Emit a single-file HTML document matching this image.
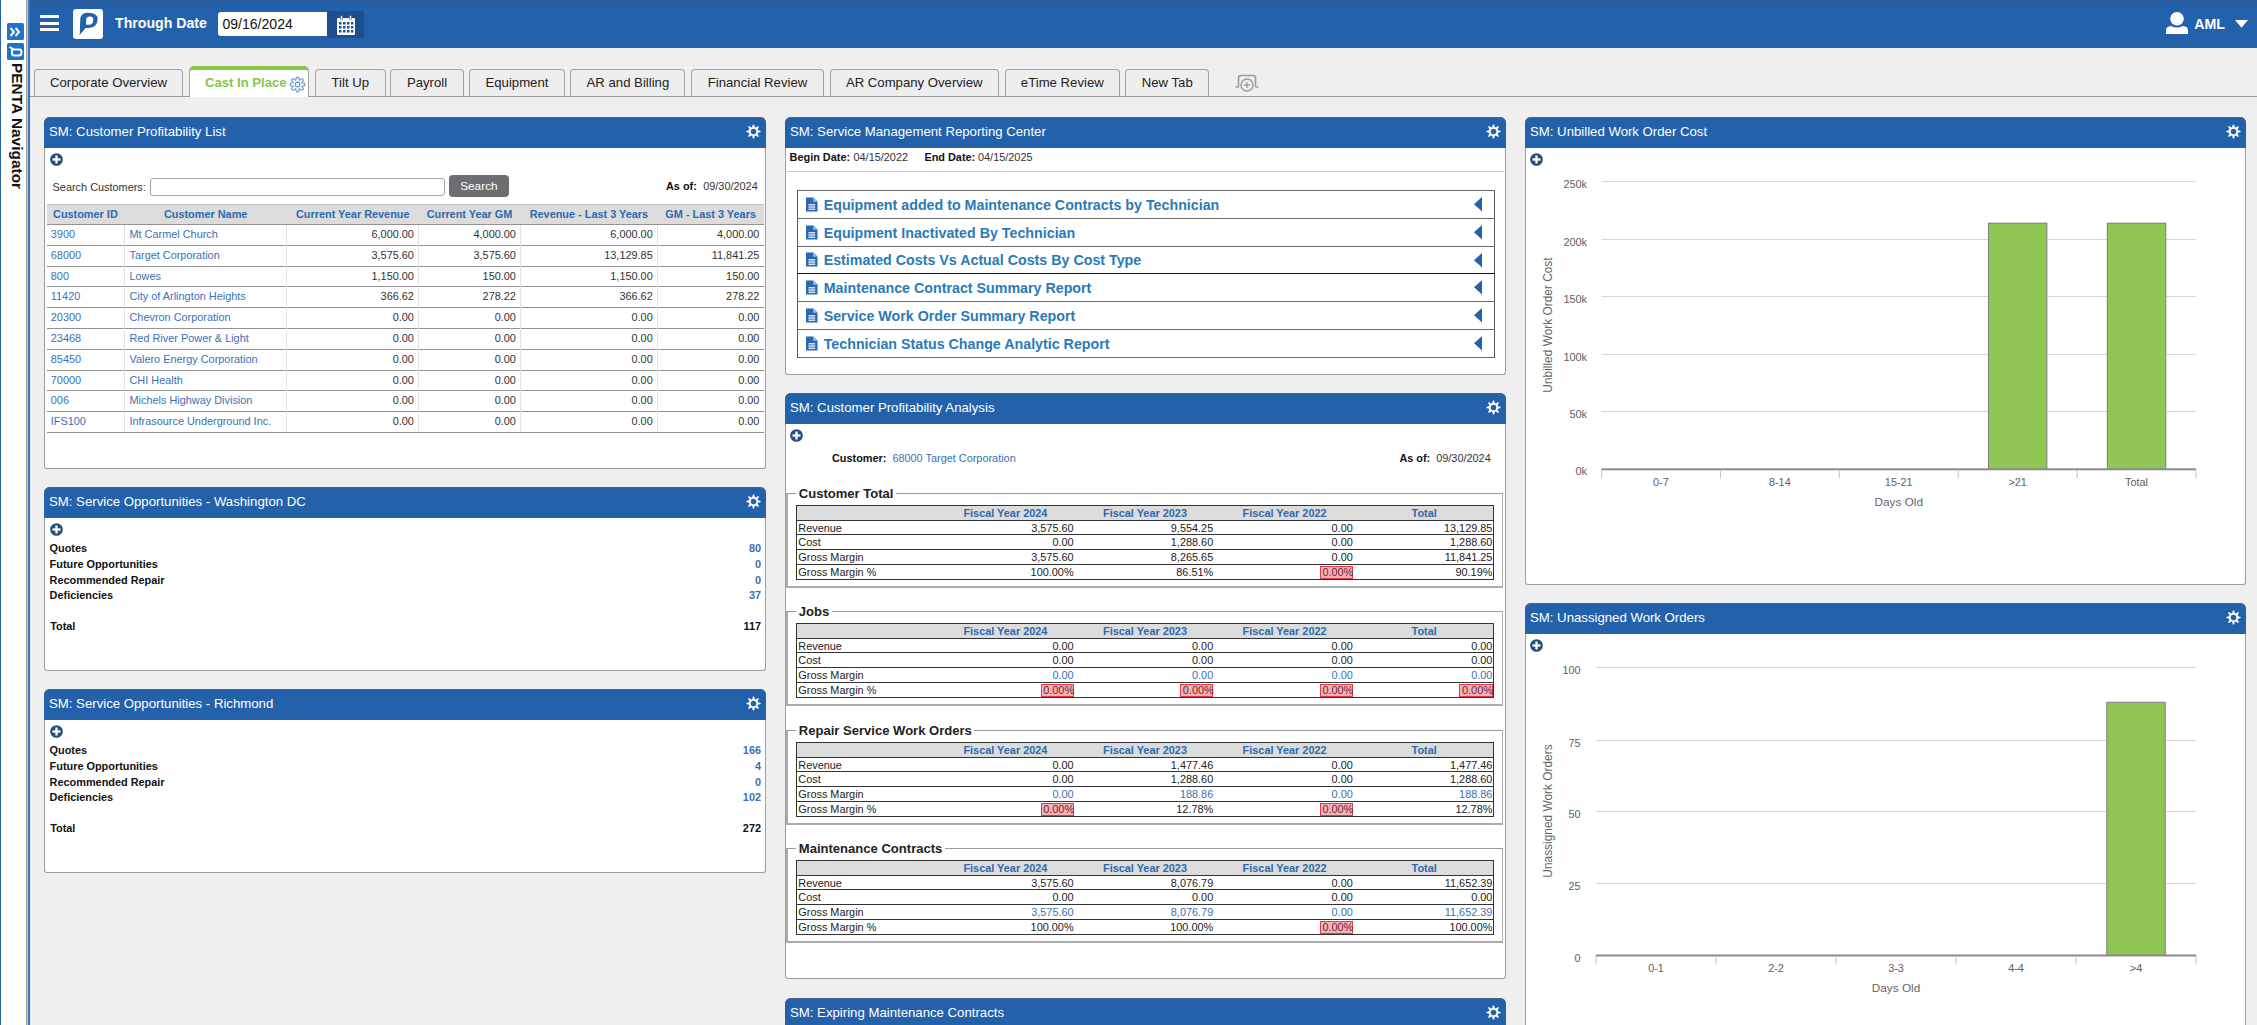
<!DOCTYPE html><html><head><meta charset="utf-8"><title>PENTA</title><style>
*{margin:0;padding:0;box-sizing:border-box}
html,body{width:2257px;height:1025px;overflow:hidden;background:#efefef;font-family:"Liberation Sans",sans-serif;color:#333;position:relative}
.t{position:absolute;white-space:nowrap;line-height:0;height:0;display:flex;align-items:center}
.t > span{line-height:normal}
.tr{justify-content:flex-end}
.tc{transform:translateX(-50%)}
.panel{position:absolute;background:#fff;border:1px solid #9d9d9d;border-top:none;border-radius:6px 6px 3px 3px}
.ph{position:absolute;left:-1px;right:-1px;top:0;height:31px;background:#2362ab;border-radius:6px 6px 0 0;box-shadow:inset 0 1px 0 #4a6286}
.pt{position:absolute;left:5px;top:15.1px;line-height:0;color:#fff;font-size:13.2px;white-space:nowrap}
.s11{font-size:10.9px}
.b{font-weight:bold}
.lk{color:#3b70b5}
.hdr{color:#2b6ab0;font-weight:bold}
</style></head><body>
<div style="position:absolute;left:0;top:0;width:1.1px;height:1025px;background:#2a65a6"></div>
<div style="position:absolute;left:1.1px;top:0;width:24.8px;height:1025px;background:#fff"></div>
<div style="position:absolute;left:25.8px;top:0;width:1.5px;height:1025px;background:#9b9b9b"></div>
<div style="position:absolute;left:27.3px;top:0;width:0.7px;height:1025px;background:#c6ccca"></div>
<div style="position:absolute;left:28px;top:0;width:2px;height:1025px;background:#3a77b9"></div>
<div style="position:absolute;left:7.2px;top:22.5px;width:16.7px;height:17.5px;background:#1f74c6;border-radius:1.5px"></div>
<svg style="position:absolute;left:7.2px;top:22.5px" width="17" height="18" viewBox="0 0 17 18"><path d="M3.5,5 L7,9 L3.5,13 M8.5,5 L12,9 L8.5,13" stroke="#fff" stroke-width="1.9" fill="none"/></svg>
<div style="position:absolute;left:7.2px;top:42.6px;width:16.7px;height:17.5px;background:#1f74c6;border-radius:1.5px"></div>
<svg style="position:absolute;left:7.2px;top:42.6px" width="17" height="18" viewBox="0 0 17 18"><path d="M2.5,4 L7,6.5 L12.5,6.5 Q14.5,6.5 14.5,9 Q14.5,12.5 12,12.5 L7,12.5 Q5,12.5 5,10 L5,6.6" stroke="#fff" stroke-width="2" fill="none"/></svg>
<div style="position:absolute;left:24.5px;top:62.6px;transform-origin:0 0;transform:rotate(90deg);white-space:nowrap;font-weight:bold;font-size:15.45px;line-height:15px;color:#111">PENTA Navigator</div>
<div style="position:absolute;left:30px;top:0;width:2227px;height:48px;background:#2362ab"></div>
<div style="position:absolute;left:30px;top:0;width:2227px;height:1.5px;background:#2d5d98"></div>
<div style="position:absolute;left:40px;top:14.7px;width:19.2px;height:3px;background:#fff;border-radius:0.5px"></div>
<div style="position:absolute;left:40px;top:21.5px;width:19.2px;height:3px;background:#fff;border-radius:0.5px"></div>
<div style="position:absolute;left:40px;top:28.2px;width:19.2px;height:3px;background:#fff;border-radius:0.5px"></div>
<div style="position:absolute;left:72.8px;top:8.8px;width:30.3px;height:30.3px;background:#fff;border-radius:3px"></div>
<svg style="position:absolute;left:72.8px;top:8.8px" width="31" height="31" viewBox="0 0 31 31"><path fill="#2362ab" fill-rule="evenodd" d="M7.3,9.5 Q7.9,3.8 15,3.8 Q24.9,3.8 24.6,10.5 Q24.2,18.9 15.5,18.9 L12.6,18.9 L6.7,25.9 Z M13.1,15.7 L13.2,10.2 Q13.5,7.6 16.9,7.6 Q20.6,7.6 20.3,11.2 Q20,15.7 16,15.7 Z"/></svg>
<div class="t " style="left:115px;top:22.8px;"><span style="font-size:14.15px;font-weight:bold;color:#fff">Through Date</span></div>
<div style="position:absolute;left:217.5px;top:11.8px;width:110px;height:24.7px;background:#fff;border-radius:3px 0 0 3px"></div>
<div class="t " style="left:222.4px;top:24px;"><span style="font-size:14.07px;color:#111">09/16/2024</span></div>
<div style="position:absolute;left:327.3px;top:10.9px;width:36.3px;height:26.8px;background:#1d4f8d;border-radius:0 3px 3px 0"></div>
<svg style="position:absolute;left:335.8px;top:14.7px" width="20" height="20" viewBox="0 0 20 20"><path fill="#fff" fill-rule="evenodd" d="M1,4 Q1,3 2,3 L18,3 Q19,3 19,4 L19,19 Q19,20 18,20 L2,20 Q1,20 1,19 Z M3,7 L3,9.5 L5.5,9.5 L5.5,7Z M7,7 L7,9.5 L9.5,9.5 L9.5,7Z M11,7 L11,9.5 L13.5,9.5 L13.5,7Z M15,7 L15,9.5 L17.3,9.5 L17.3,7Z M3,11 L3,13.5 L5.5,13.5 L5.5,11Z M7,11 L7,13.5 L9.5,13.5 L9.5,11Z M11,11 L11,13.5 L13.5,13.5 L13.5,11Z M15,11 L15,13.5 L17.3,13.5 L17.3,11Z M3,15 L3,17.5 L5.5,17.5 L5.5,15Z M7,15 L7,17.5 L9.5,17.5 L9.5,15Z M11,15 L11,17.5 L13.5,17.5 L13.5,15Z M15,15 L15,17.5 L17.3,17.5 L17.3,15Z"/><rect x="4.6" y="0.5" width="2" height="4.5" rx="1" fill="#fff" stroke="#1d4f8d" stroke-width="0.6"/><rect x="13.4" y="0.5" width="2" height="4.5" rx="1" fill="#fff" stroke="#1d4f8d" stroke-width="0.6"/></svg>
<svg style="position:absolute;left:2165px;top:11px" width="24" height="24" viewBox="0 0 24 24"><circle cx="12" cy="7.7" r="6.8" fill="#fff"/><path fill="#fff" d="M1,22.9 L1,20 Q1,15.3 6,15.1 Q9,16.6 12,16.6 Q15,16.6 18,15.1 Q23,15.3 23,20 L23,22.9 Z"/></svg>
<div class="t " style="left:2194.3px;top:23.8px;"><span style="font-size:14.13px;font-weight:bold;color:#fff">AML</span></div>
<svg style="position:absolute;left:2234.5px;top:19.8px" width="13" height="8" viewBox="0 0 13 8"><path d="M0,0 L13,0 L6.5,7.7Z" fill="#fff"/></svg>
<div style="position:absolute;left:30px;top:95.6px;width:2227px;height:1.2px;background:#9b9b9b"></div>
<div style="position:absolute;left:34.2px;top:69.2px;width:148.60000000000002px;height:27px;background:#eeeeee;border:1.2px solid #a3a3a3;border-bottom:none;border-radius:4px 4px 0 0"></div>
<div class="t tc " style="left:108.5px;top:82.8px;"><span style="font-size:13.16px;color:#222">Corporate Overview</span></div>
<div style="position:absolute;left:189.3px;top:65.6px;width:120.19999999999999px;height:31.6px;background:#fff;border-radius:5px 5px 0 0;border-top:4.2px solid #88c54b;border-left:1.2px solid #a3a3a3;border-right:1.2px solid #a3a3a3"></div>
<div class="t " style="left:205px;top:82.8px;"><span style="font-size:13.1px;font-weight:bold;color:#88c44c">Cast In Place</span></div>
<svg style="position:absolute;left:289.2px;top:75.7px" width="17" height="17" viewBox="-8.5 -8.5 17 17"><path fill="none" stroke="#5f8ed0" stroke-width="1.05" stroke-linejoin="round" d="M7.35,0.00 L7.35,0.19 L7.34,0.38 L7.32,0.58 L7.29,0.77 L7.23,0.95 L7.13,1.13 L6.92,1.28 L6.52,1.39 L5.95,1.43 L5.38,1.44 L4.96,1.47 L4.72,1.53 L4.57,1.62 L4.48,1.72 L4.43,1.83 L4.39,1.95 L4.38,2.09 L4.42,2.25 L4.55,2.47 L4.82,2.78 L5.22,3.20 L5.59,3.63 L5.80,3.98 L5.84,4.24 L5.79,4.44 L5.69,4.61 L5.58,4.77 L5.46,4.92 L5.33,5.06 L5.20,5.20 L5.06,5.33 L4.92,5.46 L4.77,5.58 L4.61,5.69 L4.44,5.79 L4.24,5.84 L3.98,5.80 L3.63,5.59 L3.20,5.22 L2.78,4.82 L2.47,4.55 L2.25,4.42 L2.09,4.38 L1.95,4.39 L1.83,4.43 L1.72,4.48 L1.62,4.57 L1.53,4.72 L1.47,4.96 L1.44,5.38 L1.43,5.95 L1.39,6.52 L1.28,6.92 L1.13,7.13 L0.95,7.23 L0.77,7.29 L0.58,7.32 L0.38,7.34 L0.19,7.35 L0.00,7.35 L-0.19,7.35 L-0.38,7.34 L-0.58,7.32 L-0.77,7.29 L-0.95,7.23 L-1.13,7.13 L-1.28,6.92 L-1.39,6.52 L-1.43,5.95 L-1.44,5.38 L-1.47,4.96 L-1.53,4.72 L-1.62,4.57 L-1.72,4.48 L-1.83,4.43 L-1.95,4.39 L-2.09,4.38 L-2.25,4.42 L-2.47,4.55 L-2.78,4.82 L-3.20,5.22 L-3.63,5.59 L-3.98,5.80 L-4.24,5.84 L-4.44,5.79 L-4.61,5.69 L-4.77,5.58 L-4.92,5.46 L-5.06,5.33 L-5.20,5.20 L-5.33,5.06 L-5.46,4.92 L-5.58,4.77 L-5.69,4.61 L-5.79,4.44 L-5.84,4.24 L-5.80,3.98 L-5.59,3.63 L-5.22,3.20 L-4.82,2.78 L-4.55,2.47 L-4.42,2.25 L-4.38,2.09 L-4.39,1.95 L-4.43,1.83 L-4.48,1.72 L-4.57,1.62 L-4.72,1.53 L-4.96,1.47 L-5.38,1.44 L-5.95,1.43 L-6.52,1.39 L-6.92,1.28 L-7.13,1.13 L-7.23,0.95 L-7.29,0.77 L-7.32,0.58 L-7.34,0.38 L-7.35,0.19 L-7.35,0.00 L-7.35,-0.19 L-7.34,-0.38 L-7.32,-0.58 L-7.29,-0.77 L-7.23,-0.95 L-7.13,-1.13 L-6.92,-1.28 L-6.52,-1.39 L-5.95,-1.43 L-5.38,-1.44 L-4.96,-1.47 L-4.72,-1.53 L-4.57,-1.62 L-4.48,-1.72 L-4.43,-1.83 L-4.39,-1.95 L-4.38,-2.09 L-4.42,-2.25 L-4.55,-2.47 L-4.82,-2.78 L-5.22,-3.20 L-5.59,-3.63 L-5.80,-3.98 L-5.84,-4.24 L-5.79,-4.44 L-5.69,-4.61 L-5.58,-4.77 L-5.46,-4.92 L-5.33,-5.06 L-5.20,-5.20 L-5.06,-5.33 L-4.92,-5.46 L-4.77,-5.58 L-4.61,-5.69 L-4.44,-5.79 L-4.24,-5.84 L-3.98,-5.80 L-3.63,-5.59 L-3.20,-5.22 L-2.78,-4.82 L-2.47,-4.55 L-2.25,-4.42 L-2.09,-4.38 L-1.95,-4.39 L-1.83,-4.43 L-1.72,-4.48 L-1.62,-4.57 L-1.53,-4.72 L-1.47,-4.96 L-1.44,-5.38 L-1.43,-5.95 L-1.39,-6.52 L-1.28,-6.92 L-1.13,-7.13 L-0.95,-7.23 L-0.77,-7.29 L-0.58,-7.32 L-0.38,-7.34 L-0.19,-7.35 L-0.00,-7.35 L0.19,-7.35 L0.38,-7.34 L0.58,-7.32 L0.77,-7.29 L0.95,-7.23 L1.13,-7.13 L1.28,-6.92 L1.39,-6.52 L1.43,-5.95 L1.44,-5.38 L1.47,-4.96 L1.53,-4.72 L1.62,-4.57 L1.72,-4.48 L1.83,-4.43 L1.95,-4.39 L2.09,-4.38 L2.25,-4.42 L2.47,-4.55 L2.78,-4.82 L3.20,-5.22 L3.63,-5.59 L3.98,-5.80 L4.24,-5.84 L4.44,-5.79 L4.61,-5.69 L4.77,-5.58 L4.92,-5.46 L5.06,-5.33 L5.20,-5.20 L5.33,-5.06 L5.46,-4.92 L5.58,-4.77 L5.69,-4.61 L5.79,-4.44 L5.84,-4.24 L5.80,-3.98 L5.59,-3.63 L5.22,-3.20 L4.82,-2.78 L4.55,-2.47 L4.42,-2.25 L4.38,-2.09 L4.39,-1.95 L4.43,-1.83 L4.48,-1.72 L4.57,-1.62 L4.72,-1.53 L4.96,-1.47 L5.38,-1.44 L5.95,-1.43 L6.52,-1.39 L6.92,-1.28 L7.13,-1.13 L7.23,-0.95 L7.29,-0.77 L7.32,-0.58 L7.34,-0.38 L7.35,-0.19Z"/><circle cx="0" cy="0" r="2.3" fill="none" stroke="#5f8ed0" stroke-width="1.2"/></svg>
<div style="position:absolute;left:315px;top:69.2px;width:70.60000000000002px;height:27px;background:#eeeeee;border:1.2px solid #a3a3a3;border-bottom:none;border-radius:4px 4px 0 0"></div>
<div class="t tc " style="left:350.3px;top:82.8px;"><span style="font-size:13.16px;color:#222">Tilt Up</span></div>
<div style="position:absolute;left:390.4px;top:69.2px;width:73.30000000000001px;height:27px;background:#eeeeee;border:1.2px solid #a3a3a3;border-bottom:none;border-radius:4px 4px 0 0"></div>
<div class="t tc " style="left:427.04999999999995px;top:82.8px;"><span style="font-size:13.16px;color:#222">Payroll</span></div>
<div style="position:absolute;left:469.3px;top:69.2px;width:95.30000000000001px;height:27px;background:#eeeeee;border:1.2px solid #a3a3a3;border-bottom:none;border-radius:4px 4px 0 0"></div>
<div class="t tc " style="left:516.95px;top:82.8px;"><span style="font-size:13.16px;color:#222">Equipment</span></div>
<div style="position:absolute;left:570.4px;top:69.2px;width:115.0px;height:27px;background:#eeeeee;border:1.2px solid #a3a3a3;border-bottom:none;border-radius:4px 4px 0 0"></div>
<div class="t tc " style="left:627.9px;top:82.8px;"><span style="font-size:13.16px;color:#222">AR and Billing</span></div>
<div style="position:absolute;left:691.4px;top:69.2px;width:132.20000000000005px;height:27px;background:#eeeeee;border:1.2px solid #a3a3a3;border-bottom:none;border-radius:4px 4px 0 0"></div>
<div class="t tc " style="left:757.5px;top:82.8px;"><span style="font-size:13.16px;color:#222">Financial Review</span></div>
<div style="position:absolute;left:829.8px;top:69.2px;width:168.9000000000001px;height:27px;background:#eeeeee;border:1.2px solid #a3a3a3;border-bottom:none;border-radius:4px 4px 0 0"></div>
<div class="t tc " style="left:914.25px;top:82.8px;"><span style="font-size:13.16px;color:#222">AR Company Overview</span></div>
<div style="position:absolute;left:1005px;top:69.2px;width:114.59999999999991px;height:27px;background:#eeeeee;border:1.2px solid #a3a3a3;border-bottom:none;border-radius:4px 4px 0 0"></div>
<div class="t tc " style="left:1062.3px;top:82.8px;"><span style="font-size:13.16px;color:#222">eTime Review</span></div>
<div style="position:absolute;left:1125.3px;top:69.2px;width:83.90000000000009px;height:27px;background:#eeeeee;border:1.2px solid #a3a3a3;border-bottom:none;border-radius:4px 4px 0 0"></div>
<div class="t tc " style="left:1167.25px;top:82.8px;"><span style="font-size:13.16px;color:#222">New Tab</span></div>
<svg style="position:absolute;left:1234px;top:74px" width="26" height="19" viewBox="0 0 26 19"><path d="M1.5,13 L4,13 Q4.5,13 4.5,12 L4.5,4 Q4.5,1.5 7,1.5 L19,1.5 Q21.5,1.5 21.5,4 L21.5,12 Q21.5,13 22.5,13 L24.5,13" fill="none" stroke="#9c9c9c" stroke-width="1.6"/><circle cx="13" cy="11" r="6" fill="#eee" stroke="#9c9c9c" stroke-width="1.5"/><path d="M13,8 L13,14 M10,11 L16,11" stroke="#9c9c9c" stroke-width="1.3"/></svg>
<div class="panel" style="left:44px;top:117px;width:722px;height:352px"><div class="ph"><span class="pt">SM: Customer Profitability List</span></div></div><svg style="position:absolute;left:745.9px;top:123.9px" width="15" height="15" viewBox="-8 -8 16 16"><path fill="#fff" fill-rule="evenodd" d="M-1.39,-4.80 L-0.60,-7.58 L0.60,-7.58 L1.39,-4.80 L2.41,-4.38 L4.94,-5.78 L5.78,-4.94 L4.38,-2.41 L4.80,-1.39 L7.58,-0.60 L7.58,0.60 L4.80,1.39 L4.38,2.41 L5.78,4.94 L4.94,5.78 L2.41,4.38 L1.39,4.80 L0.60,7.58 L-0.60,7.58 L-1.39,4.80 L-2.41,4.38 L-4.94,5.78 L-5.78,4.94 L-4.38,2.41 L-4.80,1.39 L-7.58,0.60 L-7.58,-0.60 L-4.80,-1.39 L-4.38,-2.41 L-5.78,-4.94 L-4.94,-5.78 L-2.41,-4.38Z M3.0,0 A3.0,3.0 0 1,0 -3.0,0 A3.0,3.0 0 1,0 3.0,0Z"/></svg>
<svg style="position:absolute;left:50.4px;top:153.0px" width="13" height="13" viewBox="0 0 13 13"><circle cx="6.5" cy="6.5" r="6.35" fill="#234e7e"/><rect x="2.5" y="5.35" width="8" height="2.3" fill="#fff"/><rect x="5.35" y="2.5" width="2.3" height="8" fill="#fff"/></svg>
<div class="t " style="left:52.6px;top:186.5px;"><span class="s11">Search Customers:</span></div>
<div style="position:absolute;left:150px;top:177.7px;width:294.5px;height:18px;background:#fff;border:1px solid #a5a5a5;border-radius:3px"></div>
<div style="position:absolute;left:449px;top:175.2px;width:59.8px;height:21.5px;background:#6d6e71;border-radius:4px"></div>
<div class="t tc " style="left:478.9px;top:186.2px;"><span style="font-size:11.83px;color:#fff">Search</span></div>
<div class="t " style="left:666px;top:186px;"><span class="s11 b" style="color:#111">As of:</span></div>
<div class="t tr " style="right:1499.3px;top:186px;"><span class="s11">09/30/2024</span></div>
<div style="position:absolute;left:46.5px;top:203.6px;width:717.5px;height:20.4px;background:#dcdcdc;border-top:1px solid #c4c4c4"></div>
<div class="t tc " style="left:85.4px;top:214px;"><span class="s11 hdr">Customer ID</span></div>
<div class="t tc " style="left:205.65px;top:214px;"><span class="s11 hdr">Customer Name</span></div>
<div class="t tc " style="left:352.75px;top:214px;"><span class="s11 hdr">Current Year Revenue</span></div>
<div class="t tc " style="left:469.5px;top:214px;"><span class="s11 hdr">Current Year GM</span></div>
<div class="t tc " style="left:588.9px;top:214px;"><span class="s11 hdr">Revenue - Last 3 Years</span></div>
<div class="t tc " style="left:710.65px;top:214px;"><span class="s11 hdr">GM - Last 3 Years</span></div>
<div style="position:absolute;left:46.5px;top:224px;width:717.5px;height:1px;background:#939393"></div>
<div style="position:absolute;left:46.5px;top:245px;width:717.5px;height:1px;background:#939393"></div>
<div style="position:absolute;left:46.5px;top:266px;width:717.5px;height:1px;background:#939393"></div>
<div style="position:absolute;left:46.5px;top:286px;width:717.5px;height:1px;background:#939393"></div>
<div style="position:absolute;left:46.5px;top:307px;width:717.5px;height:1px;background:#939393"></div>
<div style="position:absolute;left:46.5px;top:328px;width:717.5px;height:1px;background:#939393"></div>
<div style="position:absolute;left:46.5px;top:349px;width:717.5px;height:1px;background:#939393"></div>
<div style="position:absolute;left:46.5px;top:370px;width:717.5px;height:1px;background:#939393"></div>
<div style="position:absolute;left:46.5px;top:390px;width:717.5px;height:1px;background:#939393"></div>
<div style="position:absolute;left:46.5px;top:411px;width:717.5px;height:1px;background:#939393"></div>
<div style="position:absolute;left:46.5px;top:432px;width:717.5px;height:1px;background:#939393"></div>
<div class="t " style="left:50.8px;top:234.2px;"><span class="s11 lk">3900</span></div>
<div class="t " style="left:129.5px;top:234.2px;"><span class="s11 lk">Mt Carmel Church</span></div>
<div class="t tr " style="right:1843.1px;top:234.2px;"><span class="s11">6,000.00</span></div>
<div class="t tr " style="right:1741.1px;top:234.2px;"><span class="s11">4,000.00</span></div>
<div class="t tr " style="right:1604.3000000000002px;top:234.2px;"><span class="s11">6,000.00</span></div>
<div class="t tr " style="right:1497.6px;top:234.2px;"><span class="s11">4,000.00</span></div>
<div class="t " style="left:50.8px;top:255.2px;"><span class="s11 lk">68000</span></div>
<div class="t " style="left:129.5px;top:255.2px;"><span class="s11 lk">Target Corporation</span></div>
<div class="t tr " style="right:1843.1px;top:255.2px;"><span class="s11">3,575.60</span></div>
<div class="t tr " style="right:1741.1px;top:255.2px;"><span class="s11">3,575.60</span></div>
<div class="t tr " style="right:1604.3000000000002px;top:255.2px;"><span class="s11">13,129.85</span></div>
<div class="t tr " style="right:1497.6px;top:255.2px;"><span class="s11">11,841.25</span></div>
<div class="t " style="left:50.8px;top:275.7px;"><span class="s11 lk">800</span></div>
<div class="t " style="left:129.5px;top:275.7px;"><span class="s11 lk">Lowes</span></div>
<div class="t tr " style="right:1843.1px;top:275.7px;"><span class="s11">1,150.00</span></div>
<div class="t tr " style="right:1741.1px;top:275.7px;"><span class="s11">150.00</span></div>
<div class="t tr " style="right:1604.3000000000002px;top:275.7px;"><span class="s11">1,150.00</span></div>
<div class="t tr " style="right:1497.6px;top:275.7px;"><span class="s11">150.00</span></div>
<div class="t " style="left:50.8px;top:296.2px;"><span class="s11 lk">11420</span></div>
<div class="t " style="left:129.5px;top:296.2px;"><span class="s11 lk">City of Arlington Heights</span></div>
<div class="t tr " style="right:1843.1px;top:296.2px;"><span class="s11">366.62</span></div>
<div class="t tr " style="right:1741.1px;top:296.2px;"><span class="s11">278.22</span></div>
<div class="t tr " style="right:1604.3000000000002px;top:296.2px;"><span class="s11">366.62</span></div>
<div class="t tr " style="right:1497.6px;top:296.2px;"><span class="s11">278.22</span></div>
<div class="t " style="left:50.8px;top:317.2px;"><span class="s11 lk">20300</span></div>
<div class="t " style="left:129.5px;top:317.2px;"><span class="s11 lk">Chevron Corporation</span></div>
<div class="t tr " style="right:1843.1px;top:317.2px;"><span class="s11">0.00</span></div>
<div class="t tr " style="right:1741.1px;top:317.2px;"><span class="s11">0.00</span></div>
<div class="t tr " style="right:1604.3000000000002px;top:317.2px;"><span class="s11">0.00</span></div>
<div class="t tr " style="right:1497.6px;top:317.2px;"><span class="s11">0.00</span></div>
<div class="t " style="left:50.8px;top:338.2px;"><span class="s11 lk">23468</span></div>
<div class="t " style="left:129.5px;top:338.2px;"><span class="s11 lk">Red River Power &amp; Light</span></div>
<div class="t tr " style="right:1843.1px;top:338.2px;"><span class="s11">0.00</span></div>
<div class="t tr " style="right:1741.1px;top:338.2px;"><span class="s11">0.00</span></div>
<div class="t tr " style="right:1604.3000000000002px;top:338.2px;"><span class="s11">0.00</span></div>
<div class="t tr " style="right:1497.6px;top:338.2px;"><span class="s11">0.00</span></div>
<div class="t " style="left:50.8px;top:359.2px;"><span class="s11 lk">85450</span></div>
<div class="t " style="left:129.5px;top:359.2px;"><span class="s11 lk">Valero Energy Corporation</span></div>
<div class="t tr " style="right:1843.1px;top:359.2px;"><span class="s11">0.00</span></div>
<div class="t tr " style="right:1741.1px;top:359.2px;"><span class="s11">0.00</span></div>
<div class="t tr " style="right:1604.3000000000002px;top:359.2px;"><span class="s11">0.00</span></div>
<div class="t tr " style="right:1497.6px;top:359.2px;"><span class="s11">0.00</span></div>
<div class="t " style="left:50.8px;top:379.7px;"><span class="s11 lk">70000</span></div>
<div class="t " style="left:129.5px;top:379.7px;"><span class="s11 lk">CHI Health</span></div>
<div class="t tr " style="right:1843.1px;top:379.7px;"><span class="s11">0.00</span></div>
<div class="t tr " style="right:1741.1px;top:379.7px;"><span class="s11">0.00</span></div>
<div class="t tr " style="right:1604.3000000000002px;top:379.7px;"><span class="s11">0.00</span></div>
<div class="t tr " style="right:1497.6px;top:379.7px;"><span class="s11">0.00</span></div>
<div class="t " style="left:50.8px;top:400.2px;"><span class="s11 lk">006</span></div>
<div class="t " style="left:129.5px;top:400.2px;"><span class="s11 lk">Michels Highway Division</span></div>
<div class="t tr " style="right:1843.1px;top:400.2px;"><span class="s11">0.00</span></div>
<div class="t tr " style="right:1741.1px;top:400.2px;"><span class="s11">0.00</span></div>
<div class="t tr " style="right:1604.3000000000002px;top:400.2px;"><span class="s11">0.00</span></div>
<div class="t tr " style="right:1497.6px;top:400.2px;"><span class="s11">0.00</span></div>
<div class="t " style="left:50.8px;top:421.2px;"><span class="s11 lk">IFS100</span></div>
<div class="t " style="left:129.5px;top:421.2px;"><span class="s11 lk">Infrasource Underground Inc.</span></div>
<div class="t tr " style="right:1843.1px;top:421.2px;"><span class="s11">0.00</span></div>
<div class="t tr " style="right:1741.1px;top:421.2px;"><span class="s11">0.00</span></div>
<div class="t tr " style="right:1604.3000000000002px;top:421.2px;"><span class="s11">0.00</span></div>
<div class="t tr " style="right:1497.6px;top:421.2px;"><span class="s11">0.00</span></div>
<div style="position:absolute;left:124px;top:225px;width:1px;height:207px;background:#e2e2e2"></div>
<div style="position:absolute;left:286px;top:225px;width:1px;height:207px;background:#e2e2e2"></div>
<div style="position:absolute;left:418px;top:225px;width:1px;height:207px;background:#e2e2e2"></div>
<div style="position:absolute;left:520px;top:225px;width:1px;height:207px;background:#e2e2e2"></div>
<div style="position:absolute;left:657px;top:225px;width:1px;height:207px;background:#e2e2e2"></div>
<div class="panel" style="left:44px;top:487px;width:722px;height:184px"><div class="ph"><span class="pt">SM: Service Opportunities - Washington DC</span></div></div><svg style="position:absolute;left:745.9px;top:493.9px" width="15" height="15" viewBox="-8 -8 16 16"><path fill="#fff" fill-rule="evenodd" d="M-1.39,-4.80 L-0.60,-7.58 L0.60,-7.58 L1.39,-4.80 L2.41,-4.38 L4.94,-5.78 L5.78,-4.94 L4.38,-2.41 L4.80,-1.39 L7.58,-0.60 L7.58,0.60 L4.80,1.39 L4.38,2.41 L5.78,4.94 L4.94,5.78 L2.41,4.38 L1.39,4.80 L0.60,7.58 L-0.60,7.58 L-1.39,4.80 L-2.41,4.38 L-4.94,5.78 L-5.78,4.94 L-4.38,2.41 L-4.80,1.39 L-7.58,0.60 L-7.58,-0.60 L-4.80,-1.39 L-4.38,-2.41 L-5.78,-4.94 L-4.94,-5.78 L-2.41,-4.38Z M3.0,0 A3.0,3.0 0 1,0 -3.0,0 A3.0,3.0 0 1,0 3.0,0Z"/></svg>
<svg style="position:absolute;left:50.4px;top:523.3px" width="13" height="13" viewBox="0 0 13 13"><circle cx="6.5" cy="6.5" r="6.35" fill="#234e7e"/><rect x="2.5" y="5.35" width="8" height="2.3" fill="#fff"/><rect x="5.35" y="2.5" width="2.3" height="8" fill="#fff"/></svg>
<div class="t " style="left:49.6px;top:547.9px;"><span class="s11 b" style="color:#111">Quotes</span></div>
<div class="t tr " style="right:1496px;top:547.9px;"><span class="s11 b lk">80</span></div>
<div class="t " style="left:49.6px;top:563.9px;"><span class="s11 b" style="color:#111">Future Opportunities</span></div>
<div class="t tr " style="right:1496px;top:563.9px;"><span class="s11 b lk">0</span></div>
<div class="t " style="left:49.6px;top:579.5px;"><span class="s11 b" style="color:#111">Recommended Repair</span></div>
<div class="t tr " style="right:1496px;top:579.5px;"><span class="s11 b lk">0</span></div>
<div class="t " style="left:49.6px;top:595.1px;"><span class="s11 b" style="color:#111">Deficiencies</span></div>
<div class="t tr " style="right:1496px;top:595.1px;"><span class="s11 b lk">37</span></div>
<div class="t " style="left:50.2px;top:626.3px;"><span class="s11 b" style="color:#111">Total</span></div>
<div class="t tr " style="right:1496px;top:626.3px;"><span class="s11 b" style="color:#111">117</span></div>
<div class="panel" style="left:44px;top:689px;width:722px;height:184px"><div class="ph"><span class="pt">SM: Service Opportunities - Richmond</span></div></div><svg style="position:absolute;left:745.9px;top:695.9px" width="15" height="15" viewBox="-8 -8 16 16"><path fill="#fff" fill-rule="evenodd" d="M-1.39,-4.80 L-0.60,-7.58 L0.60,-7.58 L1.39,-4.80 L2.41,-4.38 L4.94,-5.78 L5.78,-4.94 L4.38,-2.41 L4.80,-1.39 L7.58,-0.60 L7.58,0.60 L4.80,1.39 L4.38,2.41 L5.78,4.94 L4.94,5.78 L2.41,4.38 L1.39,4.80 L0.60,7.58 L-0.60,7.58 L-1.39,4.80 L-2.41,4.38 L-4.94,5.78 L-5.78,4.94 L-4.38,2.41 L-4.80,1.39 L-7.58,0.60 L-7.58,-0.60 L-4.80,-1.39 L-4.38,-2.41 L-5.78,-4.94 L-4.94,-5.78 L-2.41,-4.38Z M3.0,0 A3.0,3.0 0 1,0 -3.0,0 A3.0,3.0 0 1,0 3.0,0Z"/></svg>
<svg style="position:absolute;left:50.4px;top:725.3px" width="13" height="13" viewBox="0 0 13 13"><circle cx="6.5" cy="6.5" r="6.35" fill="#234e7e"/><rect x="2.5" y="5.35" width="8" height="2.3" fill="#fff"/><rect x="5.35" y="2.5" width="2.3" height="8" fill="#fff"/></svg>
<div class="t " style="left:49.6px;top:749.9px;"><span class="s11 b" style="color:#111">Quotes</span></div>
<div class="t tr " style="right:1496px;top:749.9px;"><span class="s11 b lk">166</span></div>
<div class="t " style="left:49.6px;top:765.9px;"><span class="s11 b" style="color:#111">Future Opportunities</span></div>
<div class="t tr " style="right:1496px;top:765.9px;"><span class="s11 b lk">4</span></div>
<div class="t " style="left:49.6px;top:781.5px;"><span class="s11 b" style="color:#111">Recommended Repair</span></div>
<div class="t tr " style="right:1496px;top:781.5px;"><span class="s11 b lk">0</span></div>
<div class="t " style="left:49.6px;top:797.1px;"><span class="s11 b" style="color:#111">Deficiencies</span></div>
<div class="t tr " style="right:1496px;top:797.1px;"><span class="s11 b lk">102</span></div>
<div class="t " style="left:50.2px;top:828.3px;"><span class="s11 b" style="color:#111">Total</span></div>
<div class="t tr " style="right:1496px;top:828.3px;"><span class="s11 b" style="color:#111">272</span></div>
<div class="panel" style="left:785px;top:117px;width:721px;height:258px"><div class="ph"><span class="pt">SM: Service Management Reporting Center</span></div></div><svg style="position:absolute;left:1485.9px;top:123.9px" width="15" height="15" viewBox="-8 -8 16 16"><path fill="#fff" fill-rule="evenodd" d="M-1.39,-4.80 L-0.60,-7.58 L0.60,-7.58 L1.39,-4.80 L2.41,-4.38 L4.94,-5.78 L5.78,-4.94 L4.38,-2.41 L4.80,-1.39 L7.58,-0.60 L7.58,0.60 L4.80,1.39 L4.38,2.41 L5.78,4.94 L4.94,5.78 L2.41,4.38 L1.39,4.80 L0.60,7.58 L-0.60,7.58 L-1.39,4.80 L-2.41,4.38 L-4.94,5.78 L-5.78,4.94 L-4.38,2.41 L-4.80,1.39 L-7.58,0.60 L-7.58,-0.60 L-4.80,-1.39 L-4.38,-2.41 L-5.78,-4.94 L-4.94,-5.78 L-2.41,-4.38Z M3.0,0 A3.0,3.0 0 1,0 -3.0,0 A3.0,3.0 0 1,0 3.0,0Z"/></svg>
<div class="t " style="left:789.6px;top:157px;"><span class="s11 b" style="color:#111">Begin Date:</span></div>
<div class="t " style="left:853.5px;top:157px;"><span class="s11">04/15/2022</span></div>
<div class="t " style="left:924.4px;top:157px;"><span class="s11 b" style="color:#111">End Date:</span></div>
<div class="t " style="left:978px;top:157px;"><span class="s11">04/15/2025</span></div>
<div style="position:absolute;left:786.5px;top:171px;width:717.5px;height:1px;background:#c9c9c9"></div>
<div style="position:absolute;left:797px;top:190px;width:1px;height:168px;background:#555"></div>
<div style="position:absolute;left:1494px;top:190px;width:1px;height:168px;background:#555"></div>
<div style="position:absolute;left:797px;top:190px;width:698px;height:1px;background:#6a6a6a"></div>
<div style="position:absolute;left:797px;top:218px;width:698px;height:1px;background:#6a6a6a"></div>
<div style="position:absolute;left:797px;top:246px;width:698px;height:1px;background:#6a6a6a"></div>
<div style="position:absolute;left:797px;top:273px;width:698px;height:1px;background:#111"></div>
<div style="position:absolute;left:797px;top:301px;width:698px;height:1px;background:#6a6a6a"></div>
<div style="position:absolute;left:797px;top:329px;width:698px;height:1px;background:#6a6a6a"></div>
<div style="position:absolute;left:797px;top:357px;width:698px;height:1px;background:#6a6a6a"></div>
<svg style="position:absolute;left:805.5px;top:196.8px" width="12" height="15" viewBox="0 0 12 15"><path fill="#2868b4" d="M0,0.5 L7.5,0.5 L11.5,4.5 L11.5,14.5 L0,14.5Z"/><path fill="#fff" d="M7.2,0.5 L7.2,4.8 L11.5,4.8Z" opacity="0.55"/><rect x="2.4" y="7.2" width="6.8" height="1.2" fill="#fff"/><rect x="2.4" y="9.4" width="6.8" height="1.2" fill="#fff"/><rect x="2.4" y="11.6" width="6.8" height="1.2" fill="#fff"/></svg>
<div class="t " style="left:823.7px;top:204.60000000000002px;"><span style="font-size:14.25px;font-weight:bold;color:#2a7ab8">Equipment added to Maintenance Contracts by Technician</span></div>
<svg style="position:absolute;left:1474px;top:197.1px" width="8" height="15" viewBox="0 0 8 15"><path d="M8,0 L8,14.5 L0,7.25Z" fill="#2362ab"/></svg>
<svg style="position:absolute;left:805.5px;top:224.8px" width="12" height="15" viewBox="0 0 12 15"><path fill="#2868b4" d="M0,0.5 L7.5,0.5 L11.5,4.5 L11.5,14.5 L0,14.5Z"/><path fill="#fff" d="M7.2,0.5 L7.2,4.8 L11.5,4.8Z" opacity="0.55"/><rect x="2.4" y="7.2" width="6.8" height="1.2" fill="#fff"/><rect x="2.4" y="9.4" width="6.8" height="1.2" fill="#fff"/><rect x="2.4" y="11.6" width="6.8" height="1.2" fill="#fff"/></svg>
<div class="t " style="left:823.7px;top:232.60000000000002px;"><span style="font-size:14.25px;font-weight:bold;color:#2a7ab8">Equipment Inactivated By Technician</span></div>
<svg style="position:absolute;left:1474px;top:225.1px" width="8" height="15" viewBox="0 0 8 15"><path d="M8,0 L8,14.5 L0,7.25Z" fill="#2362ab"/></svg>
<svg style="position:absolute;left:805.5px;top:252.3px" width="12" height="15" viewBox="0 0 12 15"><path fill="#2868b4" d="M0,0.5 L7.5,0.5 L11.5,4.5 L11.5,14.5 L0,14.5Z"/><path fill="#fff" d="M7.2,0.5 L7.2,4.8 L11.5,4.8Z" opacity="0.55"/><rect x="2.4" y="7.2" width="6.8" height="1.2" fill="#fff"/><rect x="2.4" y="9.4" width="6.8" height="1.2" fill="#fff"/><rect x="2.4" y="11.6" width="6.8" height="1.2" fill="#fff"/></svg>
<div class="t " style="left:823.7px;top:260.1px;"><span style="font-size:14.25px;font-weight:bold;color:#2a7ab8">Estimated Costs Vs Actual Costs By Cost Type</span></div>
<svg style="position:absolute;left:1474px;top:252.6px" width="8" height="15" viewBox="0 0 8 15"><path d="M8,0 L8,14.5 L0,7.25Z" fill="#2362ab"/></svg>
<svg style="position:absolute;left:805.5px;top:279.8px" width="12" height="15" viewBox="0 0 12 15"><path fill="#2868b4" d="M0,0.5 L7.5,0.5 L11.5,4.5 L11.5,14.5 L0,14.5Z"/><path fill="#fff" d="M7.2,0.5 L7.2,4.8 L11.5,4.8Z" opacity="0.55"/><rect x="2.4" y="7.2" width="6.8" height="1.2" fill="#fff"/><rect x="2.4" y="9.4" width="6.8" height="1.2" fill="#fff"/><rect x="2.4" y="11.6" width="6.8" height="1.2" fill="#fff"/></svg>
<div class="t " style="left:823.7px;top:287.6px;"><span style="font-size:14.25px;font-weight:bold;color:#2a7ab8">Maintenance Contract Summary Report</span></div>
<svg style="position:absolute;left:1474px;top:280.1px" width="8" height="15" viewBox="0 0 8 15"><path d="M8,0 L8,14.5 L0,7.25Z" fill="#2362ab"/></svg>
<svg style="position:absolute;left:805.5px;top:307.8px" width="12" height="15" viewBox="0 0 12 15"><path fill="#2868b4" d="M0,0.5 L7.5,0.5 L11.5,4.5 L11.5,14.5 L0,14.5Z"/><path fill="#fff" d="M7.2,0.5 L7.2,4.8 L11.5,4.8Z" opacity="0.55"/><rect x="2.4" y="7.2" width="6.8" height="1.2" fill="#fff"/><rect x="2.4" y="9.4" width="6.8" height="1.2" fill="#fff"/><rect x="2.4" y="11.6" width="6.8" height="1.2" fill="#fff"/></svg>
<div class="t " style="left:823.7px;top:315.6px;"><span style="font-size:14.25px;font-weight:bold;color:#2a7ab8">Service Work Order Summary Report</span></div>
<svg style="position:absolute;left:1474px;top:308.1px" width="8" height="15" viewBox="0 0 8 15"><path d="M8,0 L8,14.5 L0,7.25Z" fill="#2362ab"/></svg>
<svg style="position:absolute;left:805.5px;top:335.8px" width="12" height="15" viewBox="0 0 12 15"><path fill="#2868b4" d="M0,0.5 L7.5,0.5 L11.5,4.5 L11.5,14.5 L0,14.5Z"/><path fill="#fff" d="M7.2,0.5 L7.2,4.8 L11.5,4.8Z" opacity="0.55"/><rect x="2.4" y="7.2" width="6.8" height="1.2" fill="#fff"/><rect x="2.4" y="9.4" width="6.8" height="1.2" fill="#fff"/><rect x="2.4" y="11.6" width="6.8" height="1.2" fill="#fff"/></svg>
<div class="t " style="left:823.7px;top:343.6px;"><span style="font-size:14.25px;font-weight:bold;color:#2a7ab8">Technician Status Change Analytic Report</span></div>
<svg style="position:absolute;left:1474px;top:336.1px" width="8" height="15" viewBox="0 0 8 15"><path d="M8,0 L8,14.5 L0,7.25Z" fill="#2362ab"/></svg>
<div class="panel" style="left:785px;top:393px;width:721px;height:586px"><div class="ph"><span class="pt">SM: Customer Profitability Analysis</span></div></div><svg style="position:absolute;left:1485.9px;top:399.9px" width="15" height="15" viewBox="-8 -8 16 16"><path fill="#fff" fill-rule="evenodd" d="M-1.39,-4.80 L-0.60,-7.58 L0.60,-7.58 L1.39,-4.80 L2.41,-4.38 L4.94,-5.78 L5.78,-4.94 L4.38,-2.41 L4.80,-1.39 L7.58,-0.60 L7.58,0.60 L4.80,1.39 L4.38,2.41 L5.78,4.94 L4.94,5.78 L2.41,4.38 L1.39,4.80 L0.60,7.58 L-0.60,7.58 L-1.39,4.80 L-2.41,4.38 L-4.94,5.78 L-5.78,4.94 L-4.38,2.41 L-4.80,1.39 L-7.58,0.60 L-7.58,-0.60 L-4.80,-1.39 L-4.38,-2.41 L-5.78,-4.94 L-4.94,-5.78 L-2.41,-4.38Z M3.0,0 A3.0,3.0 0 1,0 -3.0,0 A3.0,3.0 0 1,0 3.0,0Z"/></svg>
<svg style="position:absolute;left:790.1px;top:428.8px" width="13" height="13" viewBox="0 0 13 13"><circle cx="6.5" cy="6.5" r="6.35" fill="#234e7e"/><rect x="2.5" y="5.35" width="8" height="2.3" fill="#fff"/><rect x="5.35" y="2.5" width="2.3" height="8" fill="#fff"/></svg>
<div class="t " style="left:832px;top:457.8px;"><span class="s11 b" style="color:#111">Customer:</span></div>
<div class="t " style="left:892.4px;top:457.8px;"><span class="s11 lk">68000 Target Corporation</span></div>
<div class="t " style="left:1399.4px;top:457.8px;"><span class="s11 b" style="color:#111">As of:</span></div>
<div class="t tr " style="right:766.3px;top:457.8px;"><span class="s11">09/30/2024</span></div>
<div style="position:absolute;left:786px;top:493px;width:717px;height:95px;border-top:1px solid #9a9a9a;border-left:2px solid #ababab;border-bottom:2px solid #ababab;border-right:1px solid #b0b0b0"></div>
<div class="t" style="left:795.6px;top:493.6px;"><span style="font-size:13.06px;font-weight:bold;color:#222;background:#fff;padding:0 2.4px 0 3.2px;line-height:8px;display:inline-block">Customer Total</span></div>
<div style="position:absolute;left:796px;top:505px;width:698px;height:75px;border:1px solid #333;background:#fff"></div>
<div style="position:absolute;left:797px;top:506px;width:696px;height:14px;background:#dcdcdc"></div>
<div style="position:absolute;left:796px;top:520px;width:698px;height:1px;background:#333"></div>
<div style="position:absolute;left:796px;top:534px;width:698px;height:1px;background:#333"></div>
<div style="position:absolute;left:796px;top:549px;width:698px;height:1px;background:#333"></div>
<div style="position:absolute;left:796px;top:564px;width:698px;height:1px;background:#333"></div>
<div class="t tc " style="left:1005.4px;top:513.3px;"><span class="s11 hdr">Fiscal Year 2024</span></div>
<div class="t tc " style="left:1145.0px;top:513.3px;"><span class="s11 hdr">Fiscal Year 2023</span></div>
<div class="t tc " style="left:1284.6px;top:513.3px;"><span class="s11 hdr">Fiscal Year 2022</span></div>
<div class="t tc " style="left:1424.1999999999998px;top:513.3px;"><span class="s11 hdr">Total</span></div>
<div class="t " style="left:798.3px;top:527.9px;"><span class="s11" style="color:#222">Revenue</span></div>
<div class="t tr " style="right:1183.3999999999999px;top:527.9px;"><span class="s11" style="color:#222">3,575.60</span></div>
<div class="t tr " style="right:1043.8px;top:527.9px;"><span class="s11" style="color:#222">9,554.25</span></div>
<div class="t tr " style="right:904.1999999999998px;top:527.9px;"><span class="s11" style="color:#222">0.00</span></div>
<div class="t tr " style="right:764.5999999999999px;top:527.9px;"><span class="s11" style="color:#222">13,129.85</span></div>
<div class="t " style="left:798.3px;top:542.4px;"><span class="s11" style="color:#222">Cost</span></div>
<div class="t tr " style="right:1183.3999999999999px;top:542.4px;"><span class="s11" style="color:#222">0.00</span></div>
<div class="t tr " style="right:1043.8px;top:542.4px;"><span class="s11" style="color:#222">1,288.60</span></div>
<div class="t tr " style="right:904.1999999999998px;top:542.4px;"><span class="s11" style="color:#222">0.00</span></div>
<div class="t tr " style="right:764.5999999999999px;top:542.4px;"><span class="s11" style="color:#222">1,288.60</span></div>
<div class="t " style="left:798.3px;top:557.4px;"><span class="s11" style="color:#222">Gross Margin</span></div>
<div class="t tr " style="right:1183.3999999999999px;top:557.4px;"><span class="s11" style="color:#222">3,575.60</span></div>
<div class="t tr " style="right:1043.8px;top:557.4px;"><span class="s11" style="color:#222">8,265.65</span></div>
<div class="t tr " style="right:904.1999999999998px;top:557.4px;"><span class="s11" style="color:#222">0.00</span></div>
<div class="t tr " style="right:764.5999999999999px;top:557.4px;"><span class="s11" style="color:#222">11,841.25</span></div>
<div class="t " style="left:798.3px;top:572.4px;"><span class="s11" style="color:#222">Gross Margin %</span></div>
<div class="t tr " style="right:1183.3999999999999px;top:572.4px;"><span class="s11" style="color:#222">100.00%</span></div>
<div class="t tr " style="right:1043.8px;top:572.4px;"><span class="s11" style="color:#222">86.51%</span></div>
<div style="position:absolute;left:1319.8px;top:565.5px;width:33.3px;height:13.4px;background:#f7b0b6;border:1.1px solid #e23a48"></div>
<div class="t tr " style="right:903.6999999999998px;top:572.4px;"><span class="s11" style="color:#6b2434">0.00%</span></div>
<div class="t tr " style="right:764.5999999999999px;top:572.4px;"><span class="s11" style="color:#222">90.19%</span></div>
<div style="position:absolute;left:786px;top:611px;width:717px;height:95px;border-top:1px solid #9a9a9a;border-left:2px solid #ababab;border-bottom:2px solid #ababab;border-right:1px solid #b0b0b0"></div>
<div class="t" style="left:795.6px;top:611.6px;"><span style="font-size:13.06px;font-weight:bold;color:#222;background:#fff;padding:0 2.4px 0 3.2px;line-height:8px;display:inline-block">Jobs</span></div>
<div style="position:absolute;left:796px;top:623px;width:698px;height:75px;border:1px solid #333;background:#fff"></div>
<div style="position:absolute;left:797px;top:624px;width:696px;height:14px;background:#dcdcdc"></div>
<div style="position:absolute;left:796px;top:638px;width:698px;height:1px;background:#333"></div>
<div style="position:absolute;left:796px;top:652px;width:698px;height:1px;background:#333"></div>
<div style="position:absolute;left:796px;top:667px;width:698px;height:1px;background:#333"></div>
<div style="position:absolute;left:796px;top:682px;width:698px;height:1px;background:#333"></div>
<div class="t tc " style="left:1005.4px;top:631.3px;"><span class="s11 hdr">Fiscal Year 2024</span></div>
<div class="t tc " style="left:1145.0px;top:631.3px;"><span class="s11 hdr">Fiscal Year 2023</span></div>
<div class="t tc " style="left:1284.6px;top:631.3px;"><span class="s11 hdr">Fiscal Year 2022</span></div>
<div class="t tc " style="left:1424.1999999999998px;top:631.3px;"><span class="s11 hdr">Total</span></div>
<div class="t " style="left:798.3px;top:645.9px;"><span class="s11" style="color:#222">Revenue</span></div>
<div class="t tr " style="right:1183.3999999999999px;top:645.9px;"><span class="s11" style="color:#222">0.00</span></div>
<div class="t tr " style="right:1043.8px;top:645.9px;"><span class="s11" style="color:#222">0.00</span></div>
<div class="t tr " style="right:904.1999999999998px;top:645.9px;"><span class="s11" style="color:#222">0.00</span></div>
<div class="t tr " style="right:764.5999999999999px;top:645.9px;"><span class="s11" style="color:#222">0.00</span></div>
<div class="t " style="left:798.3px;top:660.4px;"><span class="s11" style="color:#222">Cost</span></div>
<div class="t tr " style="right:1183.3999999999999px;top:660.4px;"><span class="s11" style="color:#222">0.00</span></div>
<div class="t tr " style="right:1043.8px;top:660.4px;"><span class="s11" style="color:#222">0.00</span></div>
<div class="t tr " style="right:904.1999999999998px;top:660.4px;"><span class="s11" style="color:#222">0.00</span></div>
<div class="t tr " style="right:764.5999999999999px;top:660.4px;"><span class="s11" style="color:#222">0.00</span></div>
<div class="t " style="left:798.3px;top:675.4px;"><span class="s11" style="color:#222">Gross Margin</span></div>
<div class="t tr " style="right:1183.3999999999999px;top:675.4px;"><span class="s11 lk">0.00</span></div>
<div class="t tr " style="right:1043.8px;top:675.4px;"><span class="s11 lk">0.00</span></div>
<div class="t tr " style="right:904.1999999999998px;top:675.4px;"><span class="s11 lk">0.00</span></div>
<div class="t tr " style="right:764.5999999999999px;top:675.4px;"><span class="s11 lk">0.00</span></div>
<div class="t " style="left:798.3px;top:690.4px;"><span class="s11" style="color:#222">Gross Margin %</span></div>
<div style="position:absolute;left:1040.6px;top:683.5px;width:33.3px;height:13.4px;background:#f7b0b6;border:1.1px solid #e23a48"></div>
<div class="t tr " style="right:1182.8999999999999px;top:690.4px;"><span class="s11" style="color:#6b2434">0.00%</span></div>
<div style="position:absolute;left:1180.2px;top:683.5px;width:33.3px;height:13.4px;background:#f7b0b6;border:1.1px solid #e23a48"></div>
<div class="t tr " style="right:1043.3px;top:690.4px;"><span class="s11" style="color:#6b2434">0.00%</span></div>
<div style="position:absolute;left:1319.8px;top:683.5px;width:33.3px;height:13.4px;background:#f7b0b6;border:1.1px solid #e23a48"></div>
<div class="t tr " style="right:903.6999999999998px;top:690.4px;"><span class="s11" style="color:#6b2434">0.00%</span></div>
<div style="position:absolute;left:1459.4px;top:683.5px;width:33.3px;height:13.4px;background:#f7b0b6;border:1.1px solid #e23a48"></div>
<div class="t tr " style="right:764.0999999999999px;top:690.4px;"><span class="s11" style="color:#6b2434">0.00%</span></div>
<div style="position:absolute;left:786px;top:730px;width:717px;height:95px;border-top:1px solid #9a9a9a;border-left:2px solid #ababab;border-bottom:2px solid #ababab;border-right:1px solid #b0b0b0"></div>
<div class="t" style="left:795.6px;top:730.6px;"><span style="font-size:13.06px;font-weight:bold;color:#222;background:#fff;padding:0 2.4px 0 3.2px;line-height:8px;display:inline-block">Repair Service Work Orders</span></div>
<div style="position:absolute;left:796px;top:742px;width:698px;height:75px;border:1px solid #333;background:#fff"></div>
<div style="position:absolute;left:797px;top:743px;width:696px;height:14px;background:#dcdcdc"></div>
<div style="position:absolute;left:796px;top:757px;width:698px;height:1px;background:#333"></div>
<div style="position:absolute;left:796px;top:771px;width:698px;height:1px;background:#333"></div>
<div style="position:absolute;left:796px;top:786px;width:698px;height:1px;background:#333"></div>
<div style="position:absolute;left:796px;top:801px;width:698px;height:1px;background:#333"></div>
<div class="t tc " style="left:1005.4px;top:750.3px;"><span class="s11 hdr">Fiscal Year 2024</span></div>
<div class="t tc " style="left:1145.0px;top:750.3px;"><span class="s11 hdr">Fiscal Year 2023</span></div>
<div class="t tc " style="left:1284.6px;top:750.3px;"><span class="s11 hdr">Fiscal Year 2022</span></div>
<div class="t tc " style="left:1424.1999999999998px;top:750.3px;"><span class="s11 hdr">Total</span></div>
<div class="t " style="left:798.3px;top:764.9px;"><span class="s11" style="color:#222">Revenue</span></div>
<div class="t tr " style="right:1183.3999999999999px;top:764.9px;"><span class="s11" style="color:#222">0.00</span></div>
<div class="t tr " style="right:1043.8px;top:764.9px;"><span class="s11" style="color:#222">1,477.46</span></div>
<div class="t tr " style="right:904.1999999999998px;top:764.9px;"><span class="s11" style="color:#222">0.00</span></div>
<div class="t tr " style="right:764.5999999999999px;top:764.9px;"><span class="s11" style="color:#222">1,477.46</span></div>
<div class="t " style="left:798.3px;top:779.4px;"><span class="s11" style="color:#222">Cost</span></div>
<div class="t tr " style="right:1183.3999999999999px;top:779.4px;"><span class="s11" style="color:#222">0.00</span></div>
<div class="t tr " style="right:1043.8px;top:779.4px;"><span class="s11" style="color:#222">1,288.60</span></div>
<div class="t tr " style="right:904.1999999999998px;top:779.4px;"><span class="s11" style="color:#222">0.00</span></div>
<div class="t tr " style="right:764.5999999999999px;top:779.4px;"><span class="s11" style="color:#222">1,288.60</span></div>
<div class="t " style="left:798.3px;top:794.4px;"><span class="s11" style="color:#222">Gross Margin</span></div>
<div class="t tr " style="right:1183.3999999999999px;top:794.4px;"><span class="s11 lk">0.00</span></div>
<div class="t tr " style="right:1043.8px;top:794.4px;"><span class="s11 lk">188.86</span></div>
<div class="t tr " style="right:904.1999999999998px;top:794.4px;"><span class="s11 lk">0.00</span></div>
<div class="t tr " style="right:764.5999999999999px;top:794.4px;"><span class="s11 lk">188.86</span></div>
<div class="t " style="left:798.3px;top:809.4px;"><span class="s11" style="color:#222">Gross Margin %</span></div>
<div style="position:absolute;left:1040.6px;top:802.5px;width:33.3px;height:13.4px;background:#f7b0b6;border:1.1px solid #e23a48"></div>
<div class="t tr " style="right:1182.8999999999999px;top:809.4px;"><span class="s11" style="color:#6b2434">0.00%</span></div>
<div class="t tr " style="right:1043.8px;top:809.4px;"><span class="s11" style="color:#222">12.78%</span></div>
<div style="position:absolute;left:1319.8px;top:802.5px;width:33.3px;height:13.4px;background:#f7b0b6;border:1.1px solid #e23a48"></div>
<div class="t tr " style="right:903.6999999999998px;top:809.4px;"><span class="s11" style="color:#6b2434">0.00%</span></div>
<div class="t tr " style="right:764.5999999999999px;top:809.4px;"><span class="s11" style="color:#222">12.78%</span></div>
<div style="position:absolute;left:786px;top:848px;width:717px;height:95px;border-top:1px solid #9a9a9a;border-left:2px solid #ababab;border-bottom:2px solid #ababab;border-right:1px solid #b0b0b0"></div>
<div class="t" style="left:795.6px;top:848.6px;"><span style="font-size:13.06px;font-weight:bold;color:#222;background:#fff;padding:0 2.4px 0 3.2px;line-height:8px;display:inline-block">Maintenance Contracts</span></div>
<div style="position:absolute;left:796px;top:860px;width:698px;height:75px;border:1px solid #333;background:#fff"></div>
<div style="position:absolute;left:797px;top:861px;width:696px;height:14px;background:#dcdcdc"></div>
<div style="position:absolute;left:796px;top:875px;width:698px;height:1px;background:#333"></div>
<div style="position:absolute;left:796px;top:889px;width:698px;height:1px;background:#333"></div>
<div style="position:absolute;left:796px;top:904px;width:698px;height:1px;background:#333"></div>
<div style="position:absolute;left:796px;top:919px;width:698px;height:1px;background:#333"></div>
<div class="t tc " style="left:1005.4px;top:868.3px;"><span class="s11 hdr">Fiscal Year 2024</span></div>
<div class="t tc " style="left:1145.0px;top:868.3px;"><span class="s11 hdr">Fiscal Year 2023</span></div>
<div class="t tc " style="left:1284.6px;top:868.3px;"><span class="s11 hdr">Fiscal Year 2022</span></div>
<div class="t tc " style="left:1424.1999999999998px;top:868.3px;"><span class="s11 hdr">Total</span></div>
<div class="t " style="left:798.3px;top:882.9px;"><span class="s11" style="color:#222">Revenue</span></div>
<div class="t tr " style="right:1183.3999999999999px;top:882.9px;"><span class="s11" style="color:#222">3,575.60</span></div>
<div class="t tr " style="right:1043.8px;top:882.9px;"><span class="s11" style="color:#222">8,076.79</span></div>
<div class="t tr " style="right:904.1999999999998px;top:882.9px;"><span class="s11" style="color:#222">0.00</span></div>
<div class="t tr " style="right:764.5999999999999px;top:882.9px;"><span class="s11" style="color:#222">11,652.39</span></div>
<div class="t " style="left:798.3px;top:897.4px;"><span class="s11" style="color:#222">Cost</span></div>
<div class="t tr " style="right:1183.3999999999999px;top:897.4px;"><span class="s11" style="color:#222">0.00</span></div>
<div class="t tr " style="right:1043.8px;top:897.4px;"><span class="s11" style="color:#222">0.00</span></div>
<div class="t tr " style="right:904.1999999999998px;top:897.4px;"><span class="s11" style="color:#222">0.00</span></div>
<div class="t tr " style="right:764.5999999999999px;top:897.4px;"><span class="s11" style="color:#222">0.00</span></div>
<div class="t " style="left:798.3px;top:912.4px;"><span class="s11" style="color:#222">Gross Margin</span></div>
<div class="t tr " style="right:1183.3999999999999px;top:912.4px;"><span class="s11 lk">3,575.60</span></div>
<div class="t tr " style="right:1043.8px;top:912.4px;"><span class="s11 lk">8,076.79</span></div>
<div class="t tr " style="right:904.1999999999998px;top:912.4px;"><span class="s11 lk">0.00</span></div>
<div class="t tr " style="right:764.5999999999999px;top:912.4px;"><span class="s11 lk">11,652.39</span></div>
<div class="t " style="left:798.3px;top:927.4px;"><span class="s11" style="color:#222">Gross Margin %</span></div>
<div class="t tr " style="right:1183.3999999999999px;top:927.4px;"><span class="s11" style="color:#222">100.00%</span></div>
<div class="t tr " style="right:1043.8px;top:927.4px;"><span class="s11" style="color:#222">100.00%</span></div>
<div style="position:absolute;left:1319.8px;top:920.5px;width:33.3px;height:13.4px;background:#f7b0b6;border:1.1px solid #e23a48"></div>
<div class="t tr " style="right:903.6999999999998px;top:927.4px;"><span class="s11" style="color:#6b2434">0.00%</span></div>
<div class="t tr " style="right:764.5999999999999px;top:927.4px;"><span class="s11" style="color:#222">100.00%</span></div>
<div class="panel" style="left:785px;top:998px;width:721px;height:60px"><div class="ph"><span class="pt">SM: Expiring Maintenance Contracts</span></div></div><svg style="position:absolute;left:1485.9px;top:1004.9px" width="15" height="15" viewBox="-8 -8 16 16"><path fill="#fff" fill-rule="evenodd" d="M-1.39,-4.80 L-0.60,-7.58 L0.60,-7.58 L1.39,-4.80 L2.41,-4.38 L4.94,-5.78 L5.78,-4.94 L4.38,-2.41 L4.80,-1.39 L7.58,-0.60 L7.58,0.60 L4.80,1.39 L4.38,2.41 L5.78,4.94 L4.94,5.78 L2.41,4.38 L1.39,4.80 L0.60,7.58 L-0.60,7.58 L-1.39,4.80 L-2.41,4.38 L-4.94,5.78 L-5.78,4.94 L-4.38,2.41 L-4.80,1.39 L-7.58,0.60 L-7.58,-0.60 L-4.80,-1.39 L-4.38,-2.41 L-5.78,-4.94 L-4.94,-5.78 L-2.41,-4.38Z M3.0,0 A3.0,3.0 0 1,0 -3.0,0 A3.0,3.0 0 1,0 3.0,0Z"/></svg>
<div class="panel" style="left:1525px;top:117px;width:721px;height:468px"><div class="ph"><span class="pt">SM: Unbilled Work Order Cost</span></div></div><svg style="position:absolute;left:2225.9px;top:123.9px" width="15" height="15" viewBox="-8 -8 16 16"><path fill="#fff" fill-rule="evenodd" d="M-1.39,-4.80 L-0.60,-7.58 L0.60,-7.58 L1.39,-4.80 L2.41,-4.38 L4.94,-5.78 L5.78,-4.94 L4.38,-2.41 L4.80,-1.39 L7.58,-0.60 L7.58,0.60 L4.80,1.39 L4.38,2.41 L5.78,4.94 L4.94,5.78 L2.41,4.38 L1.39,4.80 L0.60,7.58 L-0.60,7.58 L-1.39,4.80 L-2.41,4.38 L-4.94,5.78 L-5.78,4.94 L-4.38,2.41 L-4.80,1.39 L-7.58,0.60 L-7.58,-0.60 L-4.80,-1.39 L-4.38,-2.41 L-5.78,-4.94 L-4.94,-5.78 L-2.41,-4.38Z M3.0,0 A3.0,3.0 0 1,0 -3.0,0 A3.0,3.0 0 1,0 3.0,0Z"/></svg>
<svg style="position:absolute;left:1530.1px;top:153.0px" width="13" height="13" viewBox="0 0 13 13"><circle cx="6.5" cy="6.5" r="6.35" fill="#234e7e"/><rect x="2.5" y="5.35" width="8" height="2.3" fill="#fff"/><rect x="5.35" y="2.5" width="2.3" height="8" fill="#fff"/></svg>
<svg style="position:absolute;left:0;top:0" width="2257" height="1025" viewBox="0 0 2257 1025"><rect x="1601.5" y="181" width="594.5" height="1" fill="#d8d8d8"/><rect x="1601.5" y="239" width="594.5" height="1" fill="#d8d8d8"/><rect x="1601.5" y="296" width="594.5" height="1" fill="#d8d8d8"/><rect x="1601.5" y="354" width="594.5" height="1" fill="#d8d8d8"/><rect x="1601.5" y="411" width="594.5" height="1" fill="#d8d8d8"/><rect x="1988.45" y="223.20" width="58.4" height="246.10" fill="#90c653" stroke="#7d7d7d" stroke-width="1"/><rect x="2107.35" y="223.20" width="58.4" height="246.10" fill="#90c653" stroke="#7d7d7d" stroke-width="1"/><rect x="1601.5" y="468.3" width="594.5" height="2" fill="#8c8c8c"/><rect x="1601.00" y="469.8" width="1.1" height="8.5" fill="#c4cad4"/><rect x="1719.90" y="469.8" width="1.1" height="8.5" fill="#c4cad4"/><rect x="1838.80" y="469.8" width="1.1" height="8.5" fill="#c4cad4"/><rect x="1957.70" y="469.8" width="1.1" height="8.5" fill="#c4cad4"/><rect x="2076.60" y="469.8" width="1.1" height="8.5" fill="#c4cad4"/><rect x="2195.50" y="469.8" width="1.1" height="8.5" fill="#c4cad4"/></svg>
<div class="t tr " style="right:670px;top:183.5px;"><span class="s11" style="color:#606060">250k</span></div>
<div class="t tr " style="right:670px;top:241.5px;"><span class="s11" style="color:#606060">200k</span></div>
<div class="t tr " style="right:670px;top:298.5px;"><span class="s11" style="color:#606060">150k</span></div>
<div class="t tr " style="right:670px;top:356.5px;"><span class="s11" style="color:#606060">100k</span></div>
<div class="t tr " style="right:670px;top:413.5px;"><span class="s11" style="color:#606060">50k</span></div>
<div class="t tr " style="right:670px;top:471.3px;"><span class="s11" style="color:#606060">0k</span></div>
<div class="t tc " style="left:1660.95px;top:482px;"><span class="s11" style="color:#606060">0-7</span></div>
<div class="t tc " style="left:1779.85px;top:482px;"><span class="s11" style="color:#606060">8-14</span></div>
<div class="t tc " style="left:1898.75px;top:482px;"><span class="s11" style="color:#606060">15-21</span></div>
<div class="t tc " style="left:2017.65px;top:482px;"><span class="s11" style="color:#606060">&gt;21</span></div>
<div class="t tc " style="left:2136.55px;top:482px;"><span class="s11" style="color:#606060">Total</span></div>
<div class="t tc " style="left:1898.75px;top:501.6px;"><span style="font-size:11.8px;color:#666">Days Old</span></div>
<div class="t tc" style="left:1548px;top:324.9px;transform:translateX(-50%) rotate(-90deg)"><span style="font-size:11.9px;color:#666">Unbilled Work Order Cost</span></div>
<div class="panel" style="left:1525px;top:603px;width:721px;height:460px"><div class="ph"><span class="pt">SM: Unassigned Work Orders</span></div></div><svg style="position:absolute;left:2225.9px;top:609.9px" width="15" height="15" viewBox="-8 -8 16 16"><path fill="#fff" fill-rule="evenodd" d="M-1.39,-4.80 L-0.60,-7.58 L0.60,-7.58 L1.39,-4.80 L2.41,-4.38 L4.94,-5.78 L5.78,-4.94 L4.38,-2.41 L4.80,-1.39 L7.58,-0.60 L7.58,0.60 L4.80,1.39 L4.38,2.41 L5.78,4.94 L4.94,5.78 L2.41,4.38 L1.39,4.80 L0.60,7.58 L-0.60,7.58 L-1.39,4.80 L-2.41,4.38 L-4.94,5.78 L-5.78,4.94 L-4.38,2.41 L-4.80,1.39 L-7.58,0.60 L-7.58,-0.60 L-4.80,-1.39 L-4.38,-2.41 L-5.78,-4.94 L-4.94,-5.78 L-2.41,-4.38Z M3.0,0 A3.0,3.0 0 1,0 -3.0,0 A3.0,3.0 0 1,0 3.0,0Z"/></svg>
<svg style="position:absolute;left:1530.1px;top:639.0px" width="13" height="13" viewBox="0 0 13 13"><circle cx="6.5" cy="6.5" r="6.35" fill="#234e7e"/><rect x="2.5" y="5.35" width="8" height="2.3" fill="#fff"/><rect x="5.35" y="2.5" width="2.3" height="8" fill="#fff"/></svg>
<svg style="position:absolute;left:0;top:0" width="2257" height="1025" viewBox="0 0 2257 1025"><rect x="1596" y="667" width="600" height="1" fill="#d8d8d8"/><rect x="1596" y="740" width="600" height="1" fill="#d8d8d8"/><rect x="1596" y="811" width="600" height="1" fill="#d8d8d8"/><rect x="1596" y="883" width="600" height="1" fill="#d8d8d8"/><rect x="2106.80" y="702.30" width="58.4" height="253.20" fill="#90c653" stroke="#7d7d7d" stroke-width="1"/><rect x="1596" y="954.5" width="600" height="2" fill="#8c8c8c"/><rect x="1595.50" y="956" width="1.1" height="8.5" fill="#c4cad4"/><rect x="1715.50" y="956" width="1.1" height="8.5" fill="#c4cad4"/><rect x="1835.50" y="956" width="1.1" height="8.5" fill="#c4cad4"/><rect x="1955.50" y="956" width="1.1" height="8.5" fill="#c4cad4"/><rect x="2075.50" y="956" width="1.1" height="8.5" fill="#c4cad4"/><rect x="2195.50" y="956" width="1.1" height="8.5" fill="#c4cad4"/></svg>
<div class="t tr " style="right:676.4000000000001px;top:669.5px;"><span class="s11" style="color:#606060">100</span></div>
<div class="t tr " style="right:676.4000000000001px;top:742.5px;"><span class="s11" style="color:#606060">75</span></div>
<div class="t tr " style="right:676.4000000000001px;top:813.5px;"><span class="s11" style="color:#606060">50</span></div>
<div class="t tr " style="right:676.4000000000001px;top:885.5px;"><span class="s11" style="color:#606060">25</span></div>
<div class="t tr " style="right:676.4000000000001px;top:957.5px;"><span class="s11" style="color:#606060">0</span></div>
<div class="t tc " style="left:1656.0px;top:968.2px;"><span class="s11" style="color:#606060">0-1</span></div>
<div class="t tc " style="left:1776.0px;top:968.2px;"><span class="s11" style="color:#606060">2-2</span></div>
<div class="t tc " style="left:1896.0px;top:968.2px;"><span class="s11" style="color:#606060">3-3</span></div>
<div class="t tc " style="left:2016.0px;top:968.2px;"><span class="s11" style="color:#606060">4-4</span></div>
<div class="t tc " style="left:2136.0px;top:968.2px;"><span class="s11" style="color:#606060">&gt;4</span></div>
<div class="t tc " style="left:1896.0px;top:987.7px;"><span style="font-size:11.8px;color:#666">Days Old</span></div>
<div class="t tc" style="left:1548px;top:811.0px;transform:translateX(-50%) rotate(-90deg)"><span style="font-size:11.9px;color:#666">Unassigned Work Orders</span></div>
</body></html>
